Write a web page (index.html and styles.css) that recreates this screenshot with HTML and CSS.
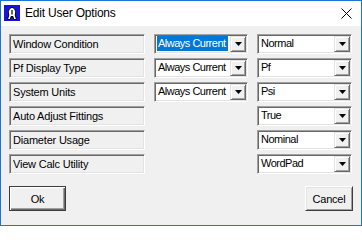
FILE: index.html
```html
<!DOCTYPE html>
<html>
<head>
<meta charset="utf-8">
<link rel="stylesheet" href="styles.css">
</head>
<body>
<div class="window">
  <div class="titlebar">
    <svg class="app-icon" width="16" height="16" viewBox="0 0 16 16">
      <rect x="0" y="0" width="16" height="16" fill="#1414dc"/>
      <path d="M3.5 14.5 L4.8 10 C3.8 7.5 4.8 2.5 8 2.5 C11.2 2.5 12.2 7.5 11.2 10 L12.5 14.5 L9.6 14.5 L9 11.5 L7 11.5 L6.4 14.5 Z" fill="#fff" stroke="#000" stroke-width="1"/>
      <path d="M8 5 L8 9.5" stroke="#000" stroke-width="1.2"/>
    </svg>
    <span class="title">Edit User Options</span>
    <svg class="close" width="11" height="11" viewBox="0 0 11 11">
      <path d="M0.5 0.5 L10.5 10.5 M10.5 0.5 L0.5 10.5" stroke="#000" stroke-width="1"/>
    </svg>
  </div>
  <div class="content">
    <div class="grid">
      <div class="label">Window Condition</div>
      <div class="combo"><div class="val"><span class="sel">Always Current</span></div><div class="drop"><svg width="7" height="4" viewBox="0 0 7 4"><path d="M0 0 L7 0 L3.5 4 Z" fill="#000"/></svg></div></div>
      <div class="combo"><div class="val"><span>Normal</span></div><div class="drop"><svg width="7" height="4" viewBox="0 0 7 4"><path d="M0 0 L7 0 L3.5 4 Z" fill="#000"/></svg></div></div>

      <div class="label">Pf Display Type</div>
      <div class="combo"><div class="val"><span>Always Current</span></div><div class="drop"><svg width="7" height="4" viewBox="0 0 7 4"><path d="M0 0 L7 0 L3.5 4 Z" fill="#000"/></svg></div></div>
      <div class="combo"><div class="val"><span>Pf</span></div><div class="drop"><svg width="7" height="4" viewBox="0 0 7 4"><path d="M0 0 L7 0 L3.5 4 Z" fill="#000"/></svg></div></div>

      <div class="label">System Units</div>
      <div class="combo"><div class="val"><span>Always Current</span></div><div class="drop"><svg width="7" height="4" viewBox="0 0 7 4"><path d="M0 0 L7 0 L3.5 4 Z" fill="#000"/></svg></div></div>
      <div class="combo"><div class="val"><span>Psi</span></div><div class="drop"><svg width="7" height="4" viewBox="0 0 7 4"><path d="M0 0 L7 0 L3.5 4 Z" fill="#000"/></svg></div></div>

      <div class="label">Auto Adjust Fittings</div>
      <div class="empty"></div>
      <div class="combo"><div class="val"><span>True</span></div><div class="drop"><svg width="7" height="4" viewBox="0 0 7 4"><path d="M0 0 L7 0 L3.5 4 Z" fill="#000"/></svg></div></div>

      <div class="label">Diameter Usage</div>
      <div class="empty"></div>
      <div class="combo"><div class="val"><span>Nominal</span></div><div class="drop"><svg width="7" height="4" viewBox="0 0 7 4"><path d="M0 0 L7 0 L3.5 4 Z" fill="#000"/></svg></div></div>

      <div class="label">View Calc Utility</div>
      <div class="empty"></div>
      <div class="combo"><div class="val"><span>WordPad</span></div><div class="drop"><svg width="7" height="4" viewBox="0 0 7 4"><path d="M0 0 L7 0 L3.5 4 Z" fill="#000"/></svg></div></div>
    </div>
    <div class="buttons">
      <div class="btn ok">Ok</div>
      <div class="btn cancel">Cancel</div>
    </div>
  </div>
</div>
</body>
</html>
```

FILE: styles.css
```css
* { box-sizing: border-box; }
html, body { margin: 0; padding: 0; }
body {
  width: 362px;
  height: 226px;
  overflow: hidden;
  font-family: "Liberation Sans", Arial, sans-serif;
  font-size: 11px;
  color: #000;
}
.window {
  width: 362px;
  height: 226px;
  border: 1px solid #1c74d4;
  background: #f0f0f0;
  display: flex;
  flex-direction: column;
}
.titlebar {
  height: 25px;
  background: #fff;
  display: flex;
  align-items: center;
  padding-left: 3px;
  flex: none;
}
.app-icon { display: block; margin-top: -1px; }
.title {
  margin-left: 5px;
  font-family: "Liberation Sans", Arial, sans-serif;
  font-size: 12px;
  letter-spacing: -0.2px;
  color: #000;
  flex: 1;
  margin-top: -1px;
}
.close { display: block; margin-right: 9px; margin-top: -1px; }
.content {
  flex: 1;
  padding: 8px 8px 0 8px;
}
.grid {
  display: grid;
  grid-template-columns: 136px 94px 95px;
  grid-auto-rows: 20px;
  column-gap: 9px;
  row-gap: 4px;
}
.label {
  border: 1px solid;
  border-color: #a0a0a0 #fff #fff #a0a0a0;
  box-shadow: inset 1px 1px #696969, inset -1px -1px #e3e3e3;
  padding: 0 0 1px 3px;
  display: flex;
  align-items: center;
  white-space: nowrap;
  letter-spacing: -0.2px;
}
.combo {
  border: 1px solid;
  border-color: #a0a0a0 #fff #fff #a0a0a0;
  box-shadow: inset 1px 1px #696969, inset -1px -1px #e3e3e3;
  background: #fff;
  padding: 1px;
  display: flex;
}
.val {
  flex: 1;
  display: flex;
  align-items: center;
  padding-left: 1px;
  white-space: nowrap;
  letter-spacing: -0.5px;
  overflow: hidden;
}
.val span {
  padding: 0 1px;
  line-height: 15px;
  height: 15px;
  margin-top: -1px;
}
.val span.sel {
  background: #0078d7;
  color: #fff;
  padding: 0 2px 0 1px;
}
.drop {
  width: 16px;
  flex: none;
  background: #f0f0f0;
  border: 1px solid;
  border-color: #e3e3e3 #696969 #696969 #e3e3e3;
  box-shadow: inset 1px 1px #fff, inset -1px -1px #a0a0a0;
  display: flex;
  align-items: center;
  justify-content: center;
}
.drop svg { display: block; }
.buttons {
  margin-top: 12px;
  display: flex;
  justify-content: space-between;
}
.btn {
  height: 25px;
  display: flex;
  align-items: center;
  justify-content: center;
  background: #f0f0f0;
  letter-spacing: -0.2px;
}
.ok {
  width: 57px;
  border: 1px solid #3c3c3c;
  box-shadow: inset 1px 1px #fff, inset -1px -1px #696969, inset -2px -2px #a0a0a0;
}
.cancel {
  width: 48px;
  border: 1px solid;
  border-color: #fff #3c3c3c #3c3c3c #fff;
  box-shadow: inset 1px 1px #e3e3e3, inset -1px -1px #a0a0a0;
}
```
